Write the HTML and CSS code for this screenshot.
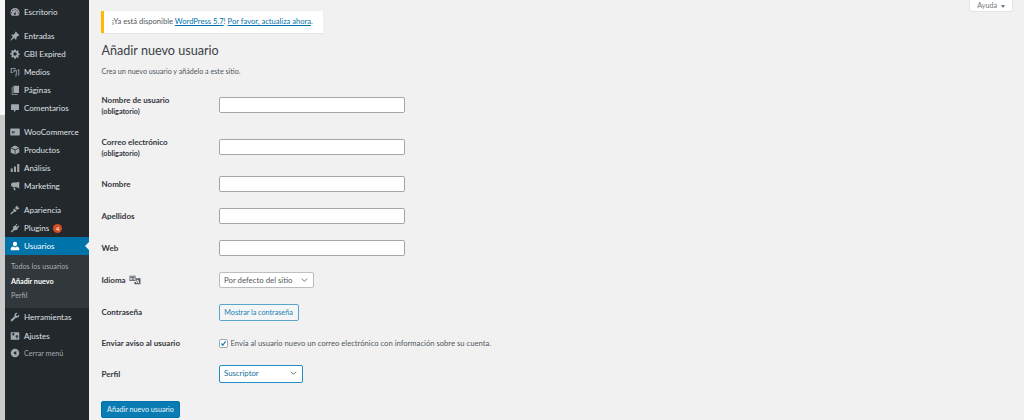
FILE: index.html
```html
<!DOCTYPE html>
<html lang="es">

<head>
    <meta charset="UTF-8">
    <title>Añadir nuevo usuario</title>
    <link rel="stylesheet" href="styles.css">
</head>

<body>
    <div class="wrap">
        <div class="edge"></div>

        <nav class="sidebar">
            <ul class="menu">
                <li class="item">
                    <svg class="ico" viewBox="0 0 20 20"><path fill-rule="evenodd" d="M10 2a9 9 0 0 0-9 9c0 2.500.9 4.700 2.500 6.500h13A9.500 9.500 0 0 0 19 11a9 9 0 0 0-9-9zm0 2a1.200 1.200 0 1 1 0 2.400A1.200 1.200 0 0 1 10 4zM5.500 6a1.200 1.200 0 1 1 0 2.400 1.200 1.200 0 0 1 0-2.400zm9 0a1.200 1.200 0 1 1 0 2.400 1.200 1.200 0 0 1 0-2.400zM3.500 10.500a1.200 1.200 0 1 1 0 2.400 1.200 1.200 0 0 1 0-2.400zm13 0a1.200 1.200 0 1 1 0 2.400 1.200 1.200 0 0 1 0-2.400zM13.500 7l-2.600 5.200a2 2 0 1 1-1.800-.400z"/></svg>
                    Escritorio
                </li>
                <li class="item sep">
                    <svg class="ico" viewBox="0 0 20 20"><path d="M11.500 1l7.500 7.500-1.500 1.200-1.200-.4-3.600 3.600.5 3-1.600 1.600-3.300-3.300L2 19l-1 0 0-1 4.800-6.300L2.500 8.400 4.100 6.800l3 .5 3.600-3.600-.4-1.200z"/></svg>
                    Entradas
                </li>
                <li class="item">
                    <svg class="ico" viewBox="0 0 20 20"><path fill-rule="evenodd" d="M8.500 1h3l.5 2.400 1.500.6 2-1.300 2.100 2.100-1.300 2 .6 1.500 2.400.5v3l-2.400.5-.6 1.500 1.300 2-2.100 2.100-2-1.300-1.500.6-.5 2.400h-3L8 16.600 6.500 16l-2 1.300-2.100-2.100 1.300-2-.6-1.500L.7 11.200v-3l2.400-.5.6-1.500-1.300-2 2.100-2.100 2 1.300L8 3.400zM10 6.500a3.500 3.500 0 1 0 0 7 3.500 3.500 0 0 0 0-7z"/></svg>
                    GBI Expired
                </li>
                <li class="item">
                    <svg class="ico" viewBox="0 0 20 20"><path d="M1.500 2h9.500v3H9V3.700H3.300V10H5v1.800H1.500zM7 6.500h6.500v9H11v-2h1v-5H8.500V11H7zM15 5h3.500v11.500H13v2.500h-2.500V17H15v-1.500h1.800V6.800H15z"/></svg>
                    Medios
                </li>
                <li class="item">
                    <svg class="ico" viewBox="0 0 20 20"><path d="M7 1.500h11v14.500H7zM5 4v14h10v1.500H3.500V4z"/></svg>
                    Páginas
                </li>
                <li class="item">
                    <svg class="ico" viewBox="0 0 20 20"><path d="M3 2.500h14a1 1 0 0 1 1 1V13a1 1 0 0 1-1 1h-5l-4 4.500V14H3a1 1 0 0 1-1-1V3.500a1 1 0 0 1 1-1z"/></svg>
                    Comentarios
                </li>
                <li class="item sep">
                    <svg class="ico" viewBox="0 0 20 20"><path fill-rule="evenodd" d="M2 3h16a1.500 1.500 0 0 1 1.500 1.500v11A1.500 1.500 0 0 1 18 17H2A1.500 1.500 0 0 1 .5 15.500v-11A1.500 1.500 0 0 1 2 3zm1.500 5l1 5h1l1-3 1 3h1l1-5H8l-.5 3-1-3h-1l-1 3-.5-3z"/></svg>
                    WooCommerce
                </li>
                <li class="item">
                    <svg class="ico" viewBox="0 0 20 20"><path d="M10 1l8 4-8 4-8-4zM1.500 6.500l7.800 3.900V19l-7.800-4zM18.500 6.500V15l-7.800 4v-8.600z"/></svg>
                    Productos
                </li>
                <li class="item">
                    <svg class="ico" viewBox="0 0 20 20"><path d="M1.500 11h4v7h-4zM8 7h4v11H8zM14.500 2h4v16h-4z"/></svg>
                    Análisis
                </li>
                <li class="item">
                    <svg class="ico" viewBox="0 0 20 20"><path d="M18.500 1.500V15l-6.500-3H6.500a4.500 4.500 0 0 1 0-9H12zM6.500 13H10l1.200 5.500H8z"/></svg>
                    Marketing
                </li>
                <li class="item sep">
                    <svg class="ico" viewBox="0 0 20 20"><path d="M13 1l6 6-3 1.500-2 1.500-4-4 1.500-2zM8.500 7l4.500 4.500-2 2.500-2-1-6.500 6-2-2L7 11.500l-1-2z"/></svg>
                    Apariencia
                </li>
                <li class="item">
                    <svg class="ico" viewBox="0 0 20 20"><path d="M13 1.500l1.800 1.500-3 3.200 2 2 3.200-3L18.500 7l-3 3.200-.7 2.800-3 1.500-2.300-.5L3 19l-1.500-1.500 5-6-.5-2.300L7.500 6l2.800-.7z"/></svg>
                    <span>Plugins</span> <span class="count">4</span>
                </li>
                <li class="item current">
                    <svg class="ico" viewBox="0 0 20 20"><path d="M10 1.500a4.200 4.200 0 0 1 4.200 4.200c0 2.300-1.600 5-4.200 5s-4.200-2.700-4.200-5A4.200 4.200 0 0 1 10 1.500zM6 11l4 2 4-2c2.500.5 4.500 2 4.500 4.500V18.500h-17v-3C1.500 13 3.500 11.500 6 11z"/></svg>
                    Usuarios
                </li>
                <li class="submenu">
                    <a>Todos los usuarios</a>
                    <a class="active">Añadir nuevo</a>
                    <a>Perfil</a>
                </li>
                <li class="item">
                    <svg class="ico" viewBox="0 0 20 20"><path d="M13.500 1.500a5 5 0 0 1 1.500.3l-3 3 .5 2.700 2.700.5 3-3a5 5 0 0 1-6.500 6.300L5 18a2 2 0 0 1-3-3l7.200-6.700a5 5 0 0 1 4.300-6.800z"/></svg>
                    Herramientas
                </li>
                <li class="item settings">
                    <svg class="ico" viewBox="0 0 20 20"><path fill-rule="evenodd" d="M1.500 2.500h17v15h-17zM4 5v2h1.500v2.500h2V7H9V5H7.500V4h-2v1zm7 4.500v2h2V15h2v-3.500h1.500v-2H15V8h-2v1.500z"/></svg>
                    Ajustes
                </li>
                <li class="item collapse">
                    <svg class="ico" viewBox="0 0 20 20"><path fill-rule="evenodd" d="M10 1.500a8.500 8.500 0 1 1 0 17 8.500 8.500 0 0 1 0-17zM12.500 6l-6 4 6 4z"/></svg>
                    Cerrar menú
                </li>
            </ul>
        </nav>

        <main class="content">
            <button class="help">Ayuda <span class="caret"></span></button>

            <div class="notice">
                ¡Ya está disponible <a>WordPress 5.7</a>! <a>Por favor, actualiza ahora</a>.
            </div>

            <h1>Añadir nuevo usuario</h1>
            <p class="intro">Crea un nuevo usuario y añádelo a este sitio.</p>

            <div class="form">
                <div class="row tall">
                    <label>Nombre de usuario <small>(obligatorio)</small></label>
                    <input class="text" type="text">
                </div>
                <div class="row tall short">
                    <label>Correo electrónico <small>(obligatorio)</small></label>
                    <input class="text" type="text">
                </div>
                <div class="row">
                    <label>Nombre</label>
                    <input class="text" type="text">
                </div>
                <div class="row">
                    <label>Apellidos</label>
                    <input class="text" type="text">
                </div>
                <div class="row">
                    <label>Web</label>
                    <input class="text" type="text">
                </div>
                <div class="row">
                    <label>Idioma
                        <svg class="lang" viewBox="0 0 22 18"><path fill-rule="evenodd" d="M1 1h11v10H1zm1.500 1.500v7h8v-7zM5.500 3h2v1H10v1.200H9c-.3 1.200-.8 2-1.500 2.700.5.300 1.200.5 2 .6v1.100c-1.200-.1-2-.4-2.800-1-.8.600-1.700.9-2.700 1V8.500c.7-.1 1.300-.3 1.800-.6-.5-.6-.9-1.200-1.100-2h1.200c.2.400.4.900.8 1.300.4-.5.700-1.100.9-2H3V4h2.500zM13 6h8v11H10v-4.500h3zm1.800 2.500L12.500 15h1.800l.4-1.300h2.300l.4 1.300h1.800l-2.300-6.500zm.9 1.800l.7 2.200h-1.400z"/></svg>
                    </label>
                    <div class="select">Por defecto del sitio
                        <svg class="chev" viewBox="0 0 10 6"><path d="M1 1l4 4 4-4"/></svg>
                    </div>
                </div>
                <div class="row">
                    <label>Contraseña</label>
                    <button class="outline">Mostrar la contraseña</button>
                </div>
                <div class="row notify">
                    <label>Enviar aviso al usuario</label>
                    <div class="check">
                        <span class="box">
                            <svg viewBox="0 0 10 10"><path d="M2 5l2 2.500 4-5.500"/></svg>
                        </span>
                        Envía al usuario nuevo un correo electrónico con información sobre su cuenta.
                    </div>
                </div>
                <div class="row">
                    <label>Perfil</label>
                    <div class="select focus">Suscriptor
                        <svg class="chev" viewBox="0 0 10 6"><path d="M1 1l4 4 4-4"/></svg>
                    </div>
                </div>
            </div>

            <button class="primary">Añadir nuevo usuario</button>
        </main>
    </div>
</body>

</html>
```

FILE: styles.css
```css
* {
    box-sizing: border-box;
}

html, body {
    margin: 0;
    height: 420px;
    overflow: hidden;
}

body {
    font-family: "Lato", "Noto Sans", sans-serif;
    font-size: 8px;
    color: #50575e;
    background-color: #f1f1f1;
}

.wrap {
    display: flex;
    height: 420px;
}

.edge {
    width: 5px;
    background: linear-gradient(#f7f7f7 115px, #cbcbcb 115px);
}

.sidebar {
    width: 84px;
    background-color: #23282d;
    color: #dfe1e3;
    flex-shrink: 0;
}

.menu {
    list-style: none;
    margin: 0;
    padding: 3px 0 0;
}

.item {
    display: flex;
    align-items: center;
    height: 18px;
    padding-left: 5px;
    gap: 4px;
    position: relative;
}

.item.sep {
    margin-top: 6px;
}

.ico {
    width: 10px;
    height: 10px;
    fill: #a3a8ad;
    flex-shrink: 0;
}

.count {
    width: 9px;
    height: 9px;
    line-height: 9px;
    border-radius: 50%;
    background-color: #d54e21;
    color: #fff;
    font-size: 6px;
    text-align: center;
}

.item.current {
    background-color: #0073aa;
    color: #fff;
}

.item.current .ico {
    fill: #fff;
}

.item.current::after {
    content: "";
    position: absolute;
    right: 0;
    top: 5px;
    border: 4px solid transparent;
    border-right-color: #f1f1f1;
    border-left-width: 0;
}

.submenu {
    display: flex;
    flex-direction: column;
    background-color: #32373c;
    padding: 5px 0 4.500px 6px;
    color: #a9adb1;
    font-size: 7.200px;
}

.submenu a {
    height: 14.500px;
    line-height: 14.500px;
}

.submenu .active {
    color: #fff;
    font-weight: 700;
}

.settings {
    margin-top: 1px;
}

.collapse {
    margin-top: -1px;
    color: #a3a8ad;
    font-size: 7.200px;
}

.content {
    flex: 1;
    padding: 11px 0 0 12px;
    position: relative;
}

.help {
    position: absolute;
    top: 0;
    right: 11px;
    width: 44px;
    height: 12px;
    border: 1px solid #e4e4e4;
    border-top: 0;
    border-radius: 0 0 3px 3px;
    background-color: #fff;
    color: #72777c;
    font: inherit;
    font-size: 7.200px;
    padding: 0;
}

.caret {
    display: inline-block;
    margin-left: 2px;
    border: 2.500px solid transparent;
    border-top: 3px solid #72777c;
    border-bottom: 0;
    vertical-align: middle;
}

.notice {
    width: 222px;
    height: 22px;
    line-height: 21px;
    background-color: #fff;
    border-left: 3px solid #ffb900;
    box-shadow: 0 1px 1px rgba(0, 0, 0, 0.04);
    padding-left: 8px;
    font-size: 7.600px;
    white-space: nowrap;
}

.notice a {
    color: #0073aa;
    text-decoration: underline;
}

h1 {
    margin: 9px 0 0 0.500px;
    font-size: 12.600px;
    font-weight: 400;
    line-height: 18px;
    color: #3a4046;
}

.intro {
    margin: 6px 0 0 0.500px;
    font-size: 7.150px;
    line-height: 12px;
}

.form {
    margin-top: 13px;
}

.row {
    display: flex;
    align-items: center;
    height: 32px;
}

.row.tall {
    height: 42px;
    align-items: flex-start;
}

.row.tall.short {
    height: 35px;
}

.row.notify {
    height: 30px;
}

.row label {
    width: 117.500px;
    padding-left: 0.500px;
    font-weight: 700;
    color: #32373c;
    flex-shrink: 0;
    display: flex;
    align-items: center;
}

.row.tall label {
    display: block;
    line-height: 11px;
    padding-top: 4px;
}

.row.tall .text {
    margin-top: 6px;
}

.row small {
    display: block;
    font-size: 7.200px;
}

.lang {
    width: 12px;
    height: 10px;
    margin-left: 3px;
    fill: #50575e;
}

.text {
    width: 186px;
    height: 16px;
    border: 1px solid #a4a7aa;
    border-radius: 2px;
    background-color: #fff;
    padding: 0;
}

.select {
    width: 95px;
    height: 16px;
    line-height: 14px;
    border: 1px solid #bcbec0;
    border-radius: 2px;
    background-color: #fff;
    padding-left: 4.500px;
    font-size: 7.800px;
    position: relative;
}

.select.focus {
    width: 84px;
    height: 18px;
    line-height: 15px;
    border: 1.500px solid #1f8ec4;
    color: #16709c;
}

.chev {
    position: absolute;
    right: 5px;
    top: 5px;
    width: 7px;
    height: 4px;
    fill: none;
    stroke: #555d66;
    stroke-width: 1.300;
}

.outline {
    width: 80px;
    height: 17px;
    border: 1px solid #5aa6cb;
    border-radius: 2px;
    background-color: #f3f5f6;
    color: #1a83b5;
    font: inherit;
    font-size: 7.200px;
    padding: 0;
}

.check {
    display: flex;
    align-items: center;
    gap: 3px;
    font-size: 7.650px;
}

.box {
    width: 9px;
    height: 9px;
    border: 1px solid #a4a7aa;
    border-radius: 2px;
    background-color: #fff;
    display: block;
}

.box svg {
    display: block;
    fill: none;
    stroke: #1a83b5;
    stroke-width: 1.800;
}

.primary {
    display: block;
    margin-top: 11px;
    width: 79px;
    height: 17px;
    border: 1px solid #0073aa;
    border-radius: 2px;
    background-color: #0a7cb4;
    color: #e8f3f8;
    font: inherit;
    font-size: 7.200px;
    padding: 0;
}
```
